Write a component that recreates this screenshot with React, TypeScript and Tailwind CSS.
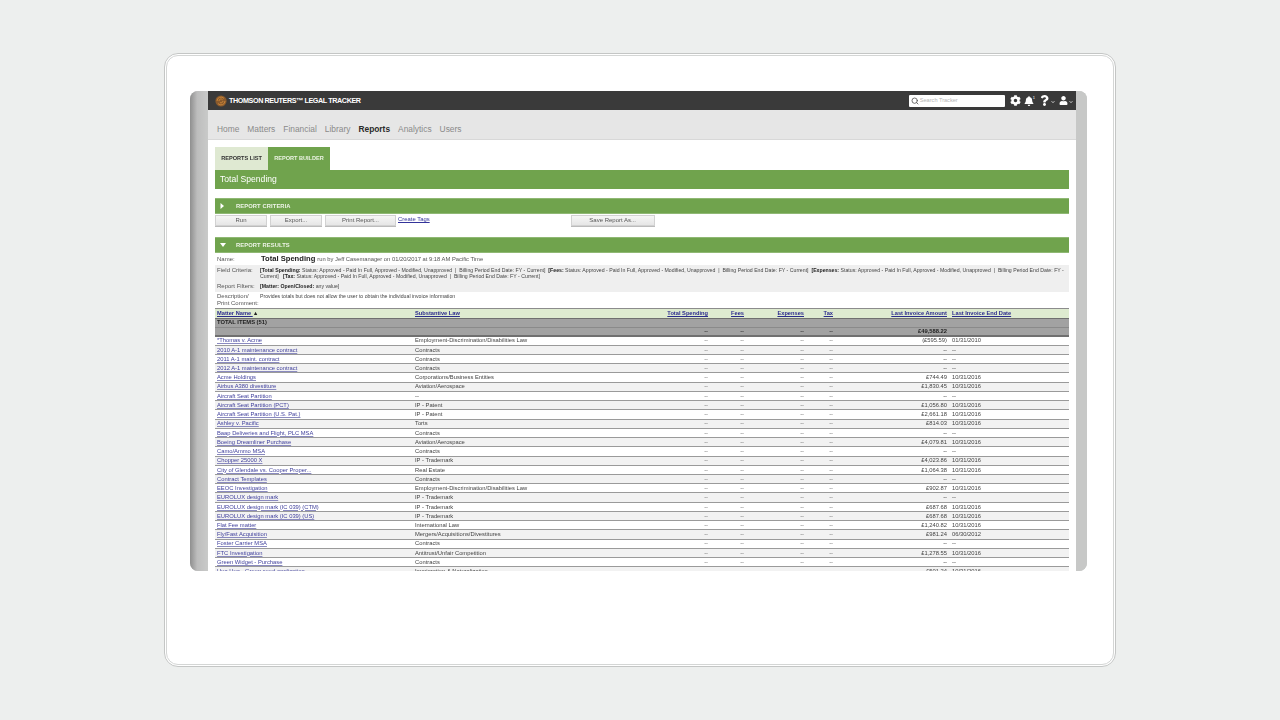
import { FaCog, FaBell, FaQuestion, FaUser, FaChevronDown } from "react-icons/fa";
import { Search } from "lucide-react";

const rows: [string, string, string, string][] = [
  ["*Thomas v. Acme", "Employment-Discrimination/Disabilities Law", "(£595.59)", "01/31/2010"],
  ["2010 A-1 maintenance contract", "Contracts", "--", "--"],
  ["2011 A-1 maint. contract", "Contracts", "--", "--"],
  ["2012 A-1 maintenance contract", "Contracts", "--", "--"],
  ["Acme Holdings", "Corporations/Business Entities", "£744.49", "10/31/2016"],
  ["Airbus A380 divestiture", "Aviation/Aerospace", "£1,830.45", "10/31/2016"],
  ["Aircraft Seat Partition", "--", "--", "--"],
  ["Aircraft Seat Partition (PCT)", "IP - Patent", "£1,056.80", "10/31/2016"],
  ["Aircraft Seat Partition (U.S. Pat.)", "IP - Patent", "£2,661.18", "10/31/2016"],
  ["Ashley v. Pacific", "Torts", "£814.03", "10/31/2016"],
  ["Baap Deliveries and Flight, PLC MSA", "Contracts", "--", "--"],
  ["Boeing Dreamliner Purchase", "Aviation/Aerospace", "£4,079.81", "10/31/2016"],
  ["Camo/Ammo MSA", "Contracts", "--", "--"],
  ["Chopper 25000 X", "IP - Trademark", "£4,023.86", "10/31/2016"],
  ["City of Glendale vs. Cooper Proper...", "Real Estate", "£1,064.38", "10/31/2016"],
  ["Contract Templates", "Contracts", "--", "--"],
  ["EEOC Investigation", "Employment-Discrimination/Disabilities Law", "£902.87", "10/31/2016"],
  ["EUROLUX design mark", "IP - Trademark", "--", "--"],
  ["EUROLUX design mark (IC 039) (CTM)", "IP - Trademark", "£687.68", "10/31/2016"],
  ["EUROLUX design mark (IC 039) (US)", "IP - Trademark", "£687.68", "10/31/2016"],
  ["Flat Fee matter", "International Law", "£1,240.82", "10/31/2016"],
  ["Fly/Fast Acquisition", "Mergers/Acquisitions/Divestitures", "£981.24", "06/30/2012"],
  ["Foster Carrier MSA", "Contracts", "--", "--"],
  ["FTC Investigation", "Antitrust/Unfair Competition", "£1,278.55", "10/31/2016"],
  ["Green Widget - Purchase", "Contracts", "--", "--"],
  ["Hua Hua - Green seed application", "Immigration & Naturalization", "£501.24", "10/31/2016"],
];

function Btn({ label, w, ml }: { label: string; w: string; ml: string }) {
  return (
    <div className={`${w} ${ml} h-[11px] flex items-center justify-center text-[6px] text-[#555] bg-gradient-to-b from-[#f6f6f6] to-[#e6e6e6] border border-[#d2d2d2] shadow-[0_1px_0_#bbb]`}>
      {label}
    </div>
  );
}

function Bar({ title, open }: { title: string; open?: boolean }) {
  return (
    <div className="h-[16px] bg-[#70a34d] border-y border-[#8fb874] flex items-center text-white">
      <span className="w-[21px] pl-[5px] flex">
        {open ? (
          <svg width="6" height="5" viewBox="0 0 6 5"><path d="M0 0h6L3 4z" fill="#fff" /></svg>
        ) : (
          <svg width="5" height="6" viewBox="0 0 5 6"><path d="M0.5 0v6L4 3z" fill="#fff" /></svg>
        )}
      </span>
      <span className="text-[5.8px] font-bold tracking-[0.1px] text-[#eef4e8]">{title}</span>
    </div>
  );
}

const colLaw = "w-[240px] shrink-0";
const colMatter = "w-[200px] shrink-0 pl-[2px]";
const colTotal = "w-[53px] shrink-0 text-right";
const colFees = "w-[36px] shrink-0 text-right";
const colExp = "w-[60px] shrink-0 text-right";
const colTax = "w-[29px] shrink-0 text-right";
const colAmt = "w-[114px] shrink-0 text-right";
const colDate = "pl-[5px] grow";

function Dash() {
  return <span className="text-[#777]">--</span>;
}

export default function App() {
  return (
    <div className="w-[1280px] h-[720px] bg-[#edefee] pt-[53px] pl-[164px] overflow-hidden font-['Liberation_Sans',Arial,sans-serif]">
      <div className="w-[952px] h-[614px] rounded-[14px] border border-[#c4c6c5] p-[1px] bg-white">
        <div className="w-full h-full rounded-[12px] border border-[#d4d6d5] bg-white pt-[35px] pl-[23px]">
          <div className="w-[897px] h-[480px] rounded-[8px] overflow-hidden flex bg-[#c7c8c7] blur-[0.4px]">
            <div className="w-[18px] shrink-0 bg-gradient-to-r from-[#8f8f8f] via-[#bdbdbd] via-40% to-[#c9cac9]" />
            <div className="w-[868px] shrink-0 bg-white h-full overflow-hidden flex flex-col">
              <header className="h-[19px] shrink-0 bg-[#3a3a3a] flex items-center pl-[7px] pr-[3px]">
                <svg width="12" height="12" viewBox="0 0 12 12" className="mr-[2px]">
                  <circle cx="6" cy="6" r="5.6" fill="#8a5a2c" />
                  <path d="M2 6a4 4 0 0 1 7-2.6M10 6a4 4 0 0 1-7 2.6M4 6a2 2 0 0 1 3.6-1.2M8 6a2 2 0 0 1-3 1.6" stroke="#d08a3a" strokeWidth="0.9" fill="none" />
                </svg>
                <span className="text-[7.2px] font-bold text-white tracking-[-0.4px] whitespace-nowrap mt-[1px]">THOMSON REUTERS™ LEGAL TRACKER</span>
                <div className="ml-auto w-[96px] h-[12px] bg-white rounded-[1px] flex items-center pl-[2px] text-[#b5b5b5] text-[5.6px]">
                  <Search size={8} strokeWidth={2.5} className="text-[#555] mr-[1px]" />
                  Search Tracker
                </div>
                <FaCog className="text-white text-[11px] ml-[5px]" />
                <div className="flex ml-[3px] items-start">
                  <FaBell className="text-white text-[10px]" />
                  <span className="text-white text-[4px] leading-none -ml-[1px]">1</span>
                </div>
                <FaQuestion className="text-white text-[11px] ml-[4px]" />
                <FaChevronDown className="text-[#ccc] text-[4px] ml-[1px] mt-[3px]" />
                <FaUser className="text-white text-[9px] ml-[4px]" />
                <FaChevronDown className="text-[#ccc] text-[4px] ml-[1px] mt-[3px]" />
              </header>

              <nav className="h-[30px] shrink-0 bg-[#e6e6e6] border-b border-[#d8d8d8] flex items-end gap-[8px] pl-[9px] pb-[3px] text-[8.4px] text-[#8a8a8a]">
                <span>Home</span>
                <span>Matters</span>
                <span>Financial</span>
                <span>Library</span>
                <span className="font-bold text-[#2a2a2a]">Reports</span>
                <span>Analytics</span>
                <span>Users</span>
              </nav>

              <main className="px-[7px] pt-[7px] grow min-h-0 overflow-hidden">
                <div className="flex h-[23px]">
                  <div className="w-[53px] bg-[#dfe9d2] flex items-center justify-center text-[5.6px] font-bold text-[#333]">REPORTS LIST</div>
                  <div className="w-[62px] bg-[#70a34d] flex items-center justify-center text-[5.6px] font-bold text-[#eaf2e2]">REPORT BUILDER</div>
                </div>
                <div className="h-[19px] bg-[#70a34d] flex items-center pl-[5px] text-[8.6px] text-white">Total Spending</div>

                <div className="mt-[9px]">
                  <Bar title="REPORT CRITERIA" />
                </div>
                <div className="flex items-start mt-[1px] h-[11px]">
                  <Btn label="Run" w="w-[52px]" ml="ml-0" />
                  <Btn label="Export..." w="w-[52px]" ml="ml-[3px]" />
                  <Btn label="Print Report..." w="w-[71px]" ml="ml-[3px]" />
                  <span className="ml-[2px] text-[5.9px] leading-[9px] underline text-[#33339a]">Create Tags</span>
                  <Btn label="Save Report As..." w="w-[84px]" ml="ml-[141px]" />
                </div>

                <div className="mt-[11px]">
                  <Bar title="REPORT RESULTS" open />
                </div>

                <div className="flex h-[12px] items-center pl-[2px] text-[#555] text-[6px]">
                  <span className="w-[44px]">Name:</span>
                  <span className="text-[7.6px] font-bold text-[#222] whitespace-nowrap">Total Spending</span>
                  <span className="ml-[2px] whitespace-nowrap text-[5.8px]">run by Jeff Casemanager on 01/20/2017 at 9:18 AM Pacific Time</span>
                </div>

                <div className="bg-[#efefef] h-[27px] text-[5.2px] text-[#444] pt-[1px]">
                  <div className="flex h-[16px] pl-[2px]">
                    <span className="w-[43px] shrink-0 text-[6px] text-[#555] leading-[9px]">Field Criteria:</span>
                    <div className="leading-[6.3px] whitespace-nowrap pt-[1px]">
                      <div>
                        <b className="text-[#222]">[Total Spending:</b> Status: Approved - Paid In Full, Approved - Modified, Unapproved&nbsp; |&nbsp; Billing Period End Date: FY - Current]&nbsp;&nbsp;
                        <b className="text-[#222]">[Fees:</b> Status: Approved - Paid In Full, Approved - Modified, Unapproved&nbsp; |&nbsp; Billing Period End Date: FY - Current]&nbsp;&nbsp;
                        <b className="text-[#222]">[Expenses:</b> Status: Approved - Paid In Full, Approved - Modified, Unapproved&nbsp; |&nbsp; Billing Period End Date: FY -
                      </div>
                      <div>
                        Current]&nbsp;&nbsp;&nbsp;<b className="text-[#222]">[Tax:</b> Status: Approved - Paid In Full, Approved - Modified, Unapproved&nbsp; |&nbsp; Billing Period End Date: FY - Current]
                      </div>
                    </div>
                  </div>
                  <div className="flex h-[9px] pl-[2px] items-center">
                    <span className="w-[43px] shrink-0 text-[6px] text-[#555]">Report Filters:</span>
                    <span><b className="text-[#222]">[Matter: Open/Closed:</b> any value]</span>
                  </div>
                </div>

                <div className="flex h-[16px] pl-[2px] text-[#555] text-[6px] leading-[7px] pt-[1px]">
                  <span className="w-[43px] shrink-0">Description/<br />Print Comment:</span>
                  <span className="text-[5.2px] text-[#444] whitespace-nowrap">Provides totals but does not allow the user to obtain the individual invoice information</span>
                </div>

                <div className="flex h-[9.5px] items-center bg-[#deebd0] border-t border-[#8c8c8c] text-[5.7px] font-bold text-[#2b2b8c] underline whitespace-nowrap">
                  <div className={colMatter}>Matter Name <span className="no-underline inline-block text-[#222]">▲</span></div>
                  <div className={colLaw}>Substantive Law</div>
                  <div className={colTotal}>Total Spending</div>
                  <div className={colFees}>Fees</div>
                  <div className={colExp}>Expenses</div>
                  <div className={colTax}>Tax</div>
                  <div className={colAmt}>Last Invoice Amount</div>
                  <div className={colDate}>Last Invoice End Date</div>
                </div>

                <div className="h-[9.5px] bg-[#a2a2a2] border-t border-[#6f6f6f] pl-[2px] flex items-center text-[5.8px] font-bold text-[#222]">TOTAL ITEMS (51)</div>
                <div className="h-[9.5px] bg-[#a2a2a2] border-t border-[#8a8a8a] border-b-2 border-b-[#707070] flex items-center text-[5.8px] font-bold text-[#222]">
                  <div className={colMatter} />
                  <div className={colLaw} />
                  <div className={colTotal}>--</div>
                  <div className={colFees}>--</div>
                  <div className={colExp}>--</div>
                  <div className={colTax}>--</div>
                  <div className={colAmt}>£49,588.22</div>
                </div>

                {rows.map((r, i) => (
                  <div
                    key={r[0]}
                    className={`h-[9.24px] flex items-center text-[5.8px] text-[#444] whitespace-nowrap border-b border-[#9a9a9a] ${i % 2 ? "bg-[#f2f2f2]" : "bg-white"}`}
                  >
                    <div className={`${colMatter} text-[#3f3f9c] underline decoration-[#8a8ac0]`}>{r[0]}</div>
                    <div className={colLaw}>{r[1]}</div>
                    <div className={colTotal}><Dash /></div>
                    <div className={colFees}><Dash /></div>
                    <div className={colExp}><Dash /></div>
                    <div className={colTax}><Dash /></div>
                    <div className={colAmt}>{r[2]}</div>
                    <div className={colDate}>{r[3]}</div>
                  </div>
                ))}
              </main>
            </div>
            <div className="w-[11px] shrink-0 bg-[#c7c8c7]" />
          </div>
        </div>
      </div>
    </div>
  );
}
